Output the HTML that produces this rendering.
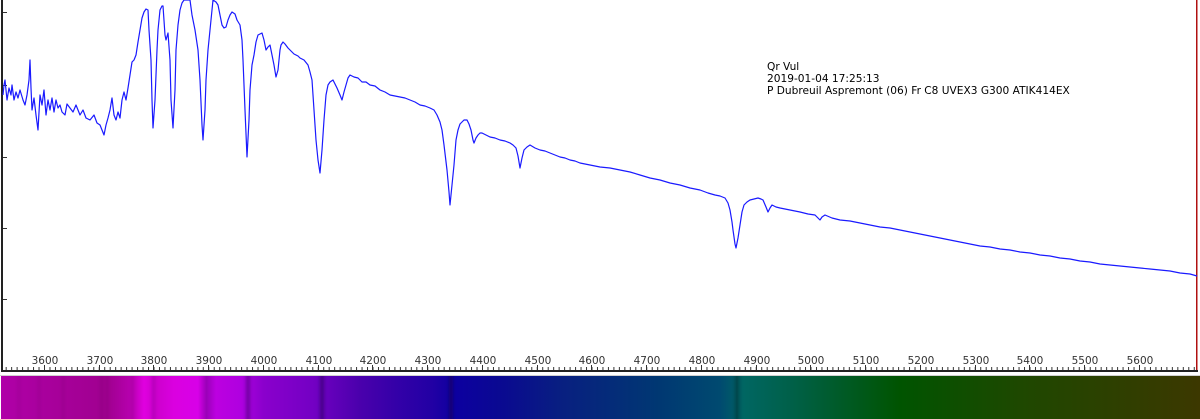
<!DOCTYPE html>
<html><head><meta charset="utf-8"><style>
html,body{margin:0;padding:0;background:#fff;width:1200px;height:419px;overflow:hidden}
svg{display:block}
</style></head><body>
<svg width="1200" height="419" viewBox="0 0 1200 419" xmlns="http://www.w3.org/2000/svg">
<defs>
<pattern id="mt" x="44" y="0" width="5.475" height="419" patternUnits="userSpaceOnUse">
<rect x="0" y="367" width="1" height="3" fill="#333"/>
</pattern>
<linearGradient id="sp" x1="0" x2="1200" y1="0" y2="0" gradientUnits="userSpaceOnUse">
<stop offset="0" stop-color="#b000a8"/>
<stop offset="0.04" stop-color="#a8009c"/>
<stop offset="0.09" stop-color="#a00090"/>
<stop offset="0.11" stop-color="#b800b0"/>
<stop offset="0.12" stop-color="#e000e0"/>
<stop offset="0.13" stop-color="#cc00cc"/>
<stop offset="0.145" stop-color="#da00e0"/>
<stop offset="0.165" stop-color="#d800e8"/>
<stop offset="0.172" stop-color="#9a00b8"/>
<stop offset="0.18" stop-color="#bc00e0"/>
<stop offset="0.2" stop-color="#b000e0"/>
<stop offset="0.22" stop-color="#8a00cc"/>
<stop offset="0.26" stop-color="#7400c4"/>
<stop offset="0.3" stop-color="#4a00ac"/>
<stop offset="0.33" stop-color="#3400a8"/>
<stop offset="0.36" stop-color="#2200a4"/>
<stop offset="0.38" stop-color="#0c00a0"/>
<stop offset="0.42" stop-color="#0a0a90"/>
<stop offset="0.47" stop-color="#082080"/>
<stop offset="0.55" stop-color="#003872"/>
<stop offset="0.6" stop-color="#004a70"/>
<stop offset="0.62" stop-color="#006662"/>
<stop offset="0.66" stop-color="#006048"/>
<stop offset="0.75" stop-color="#005400"/>
<stop offset="0.85" stop-color="#1e4800"/>
<stop offset="1" stop-color="#3c3800"/>
</linearGradient>
<filter id="bl"><feGaussianBlur stdDeviation="1.5 0"/></filter>
</defs>
<rect width="1200" height="419" fill="#fff"/>
<rect x="1" y="0" width="2" height="372" fill="#222"/>
<rect x="3" y="12" width="4" height="1" fill="#333"/>
<rect x="3" y="85" width="4" height="1" fill="#333"/>
<rect x="3" y="157" width="4" height="1" fill="#333"/>
<rect x="3" y="228" width="4" height="1" fill="#333"/>
<rect x="3" y="299" width="4" height="1" fill="#333"/>
<rect x="1196" y="0" width="1.5" height="372" fill="#b01010"/>
<rect x="3" y="366" width="1193" height="4" fill="url(#mt)"/>
<rect x="1" y="370" width="1197" height="2" fill="#222"/>
<g fill="#333">
<rect x="44" y="365" width="1" height="5"/><rect x="99" y="365" width="1" height="5"/><rect x="153" y="365" width="1" height="5"/><rect x="208" y="365" width="1" height="5"/><rect x="263" y="365" width="1" height="5"/><rect x="318" y="365" width="1" height="5"/><rect x="372" y="365" width="1" height="5"/><rect x="427" y="365" width="1" height="5"/><rect x="482" y="365" width="1" height="5"/><rect x="537" y="365" width="1" height="5"/><rect x="591" y="365" width="1" height="5"/><rect x="646" y="365" width="1" height="5"/><rect x="701" y="365" width="1" height="5"/><rect x="756" y="365" width="1" height="5"/><rect x="810" y="365" width="1" height="5"/><rect x="865" y="365" width="1" height="5"/><rect x="920" y="365" width="1" height="5"/><rect x="975" y="365" width="1" height="5"/><rect x="1029" y="365" width="1" height="5"/><rect x="1084" y="365" width="1" height="5"/><rect x="1139" y="365" width="1" height="5"/>
</g>
<g font-family="DejaVu Sans, Verdana, sans-serif" font-size="10.5" fill="#333" text-anchor="middle">
<text x="45" y="364">3600</text><text x="100" y="364">3700</text><text x="154" y="364">3800</text><text x="209" y="364">3900</text><text x="264" y="364">4000</text><text x="319" y="364">4100</text><text x="373" y="364">4200</text><text x="428" y="364">4300</text><text x="483" y="364">4400</text><text x="538" y="364">4500</text><text x="592" y="364">4600</text><text x="647" y="364">4700</text><text x="702" y="364">4800</text><text x="757" y="364">4900</text><text x="811" y="364">5000</text><text x="866" y="364">5100</text><text x="921" y="364">5200</text><text x="976" y="364">5300</text><text x="1030" y="364">5400</text><text x="1085" y="364">5500</text><text x="1140" y="364">5600</text>
</g>
<g font-family="DejaVu Sans, Verdana, sans-serif" font-size="10.6" fill="#000">
<text x="767" y="70">Qr Vul</text>
<text x="767" y="82">2019-01-04 17:25:13</text>
<text x="767" y="94">P Dubreuil Aspremont (06) Fr C8 UVEX3 G300 ATIK414EX</text>
</g>
<polyline fill="none" stroke="#1a1aff" stroke-width="1.2" stroke-linejoin="round" points="3,95 4,85 5,80 7,100 9,88 11,95 12,85 14,100 16,92 18,98 20,90 23,100 25,105 27,95 29,80 30,60 31,88 32,110 34,98 36,115 38,130 40,95 42,105 44,90 46,115 48,100 50,110 52,98 54,112 56,100 58,108 60,105 62,112 65,115 67,104 70,108 73,112 76,105 80,115 83,110 86,118 90,120 94,115 97,123 100,125 102,130 104,135 106,125 108,118 110,110 112,98 114,115 116,120 118,112 120,118 122,100 124,92 126,100 128,88 130,75 132,62 134,60 136,55 138,42 140,30 142,18 144,12 146,9 148,10 149,30 151,60 152,100 153,128 155,100 157,50 158,30 160,10 162,6 163,6 165,35 166,40 168,33 170,60 171,100 173,128 175,90 176,50 178,25 180,10 182,3 184,0 190,0 192,15 195,30 198,50 200,80 202,125 203,140 205,110 206,80 208,50 210,30 212,10 213,0 216,2 218,5 220,15 222,25 224,28 226,27 228,20 230,15 232,12 235,14 237,20 240,25 242,40 243,60 245,110 247,157 249,120 250,90 252,65 254,55 256,42 258,35 260,34 262,33 264,40 266,50 268,47 270,45 272,55 274,65 276,77 278,70 280,50 281,45 283,42 285,44 288,48 290,50 294,54 298,56 300,58 304,60 308,65 310,72 312,80 314,110 316,140 318,160 320,173 322,150 324,120 326,95 328,85 330,82 333,80 335,84 337,88 340,95 342,100 344,92 346,85 348,78 350,75 354,77 358,78 362,82 366,82 370,85 375,86 380,90 385,92 390,95 395,96 400,97 405,98 410,100 415,102 420,105 425,106 430,108 434,110 437,115 440,122 442,130 444,145 447,170 449,192 450,205 452,185 454,165 456,140 458,130 460,124 462,122 464,120 467,120 469,124 471,130 473,140 474,143 476,138 478,135 480,133 482,133 486,135 490,137 495,138 500,140 505,141 510,143 513,145 516,148 518,156 520,168 522,158 524,150 527,147 530,145 535,148 540,150 545,151 550,153 555,155 560,157 565,158 570,160 575,161 580,163 585,164 590,165 595,166 600,167 610,168 620,170 630,172 640,175 650,178 660,180 670,183 680,185 690,188 700,190 708,193 715,195 720,196 725,198 728,203 730,210 732,222 733,230 735,244 736,248 738,238 740,225 742,212 744,205 747,202 750,200 754,199 758,198 761,199 763,200 766,207 768,212 770,208 772,205 776,207 780,208 790,210 800,212 808,214 815,215 818,218 820,220 822,217 825,215 832,218 840,220 850,221 860,223 870,225 880,227 890,228 900,230 910,232 920,234 930,236 940,238 950,240 960,242 970,244 980,246 990,247 1000,249 1010,250 1020,252 1030,253 1040,255 1050,256 1060,258 1070,259 1080,261 1090,262 1100,264 1110,265 1120,266 1130,267 1140,268 1150,269 1160,270 1170,271 1180,273 1190,274 1197,276"/>
<rect x="0" y="375" width="1200" height="1" fill="#d0d0d0"/>
<rect x="1" y="376" width="1199" height="43" fill="url(#sp)"/>
<g filter="url(#bl)">
<g fill="#000" opacity="0.08">
<rect x="18" y="376" width="2" height="43"/><rect x="38" y="376" width="2" height="43"/><rect x="62" y="376" width="2" height="43"/><rect x="100" y="376" width="3" height="43"/><rect x="106" y="376" width="2" height="43"/><rect x="132" y="376" width="2" height="43"/>
</g>
<rect x="152" y="376" width="3" height="43" fill="#600070" opacity="0.25"/>
<rect x="246" y="376" width="4" height="43" fill="#300060" opacity="0.45"/>
<rect x="320" y="376" width="4" height="43" fill="#200050" opacity="0.5"/>
<rect x="449" y="376" width="4" height="43" fill="#100040" opacity="0.5"/>
<rect x="735" y="376" width="4" height="43" fill="#002828" opacity="0.5"/>
</g>
</svg>
</body></html>
